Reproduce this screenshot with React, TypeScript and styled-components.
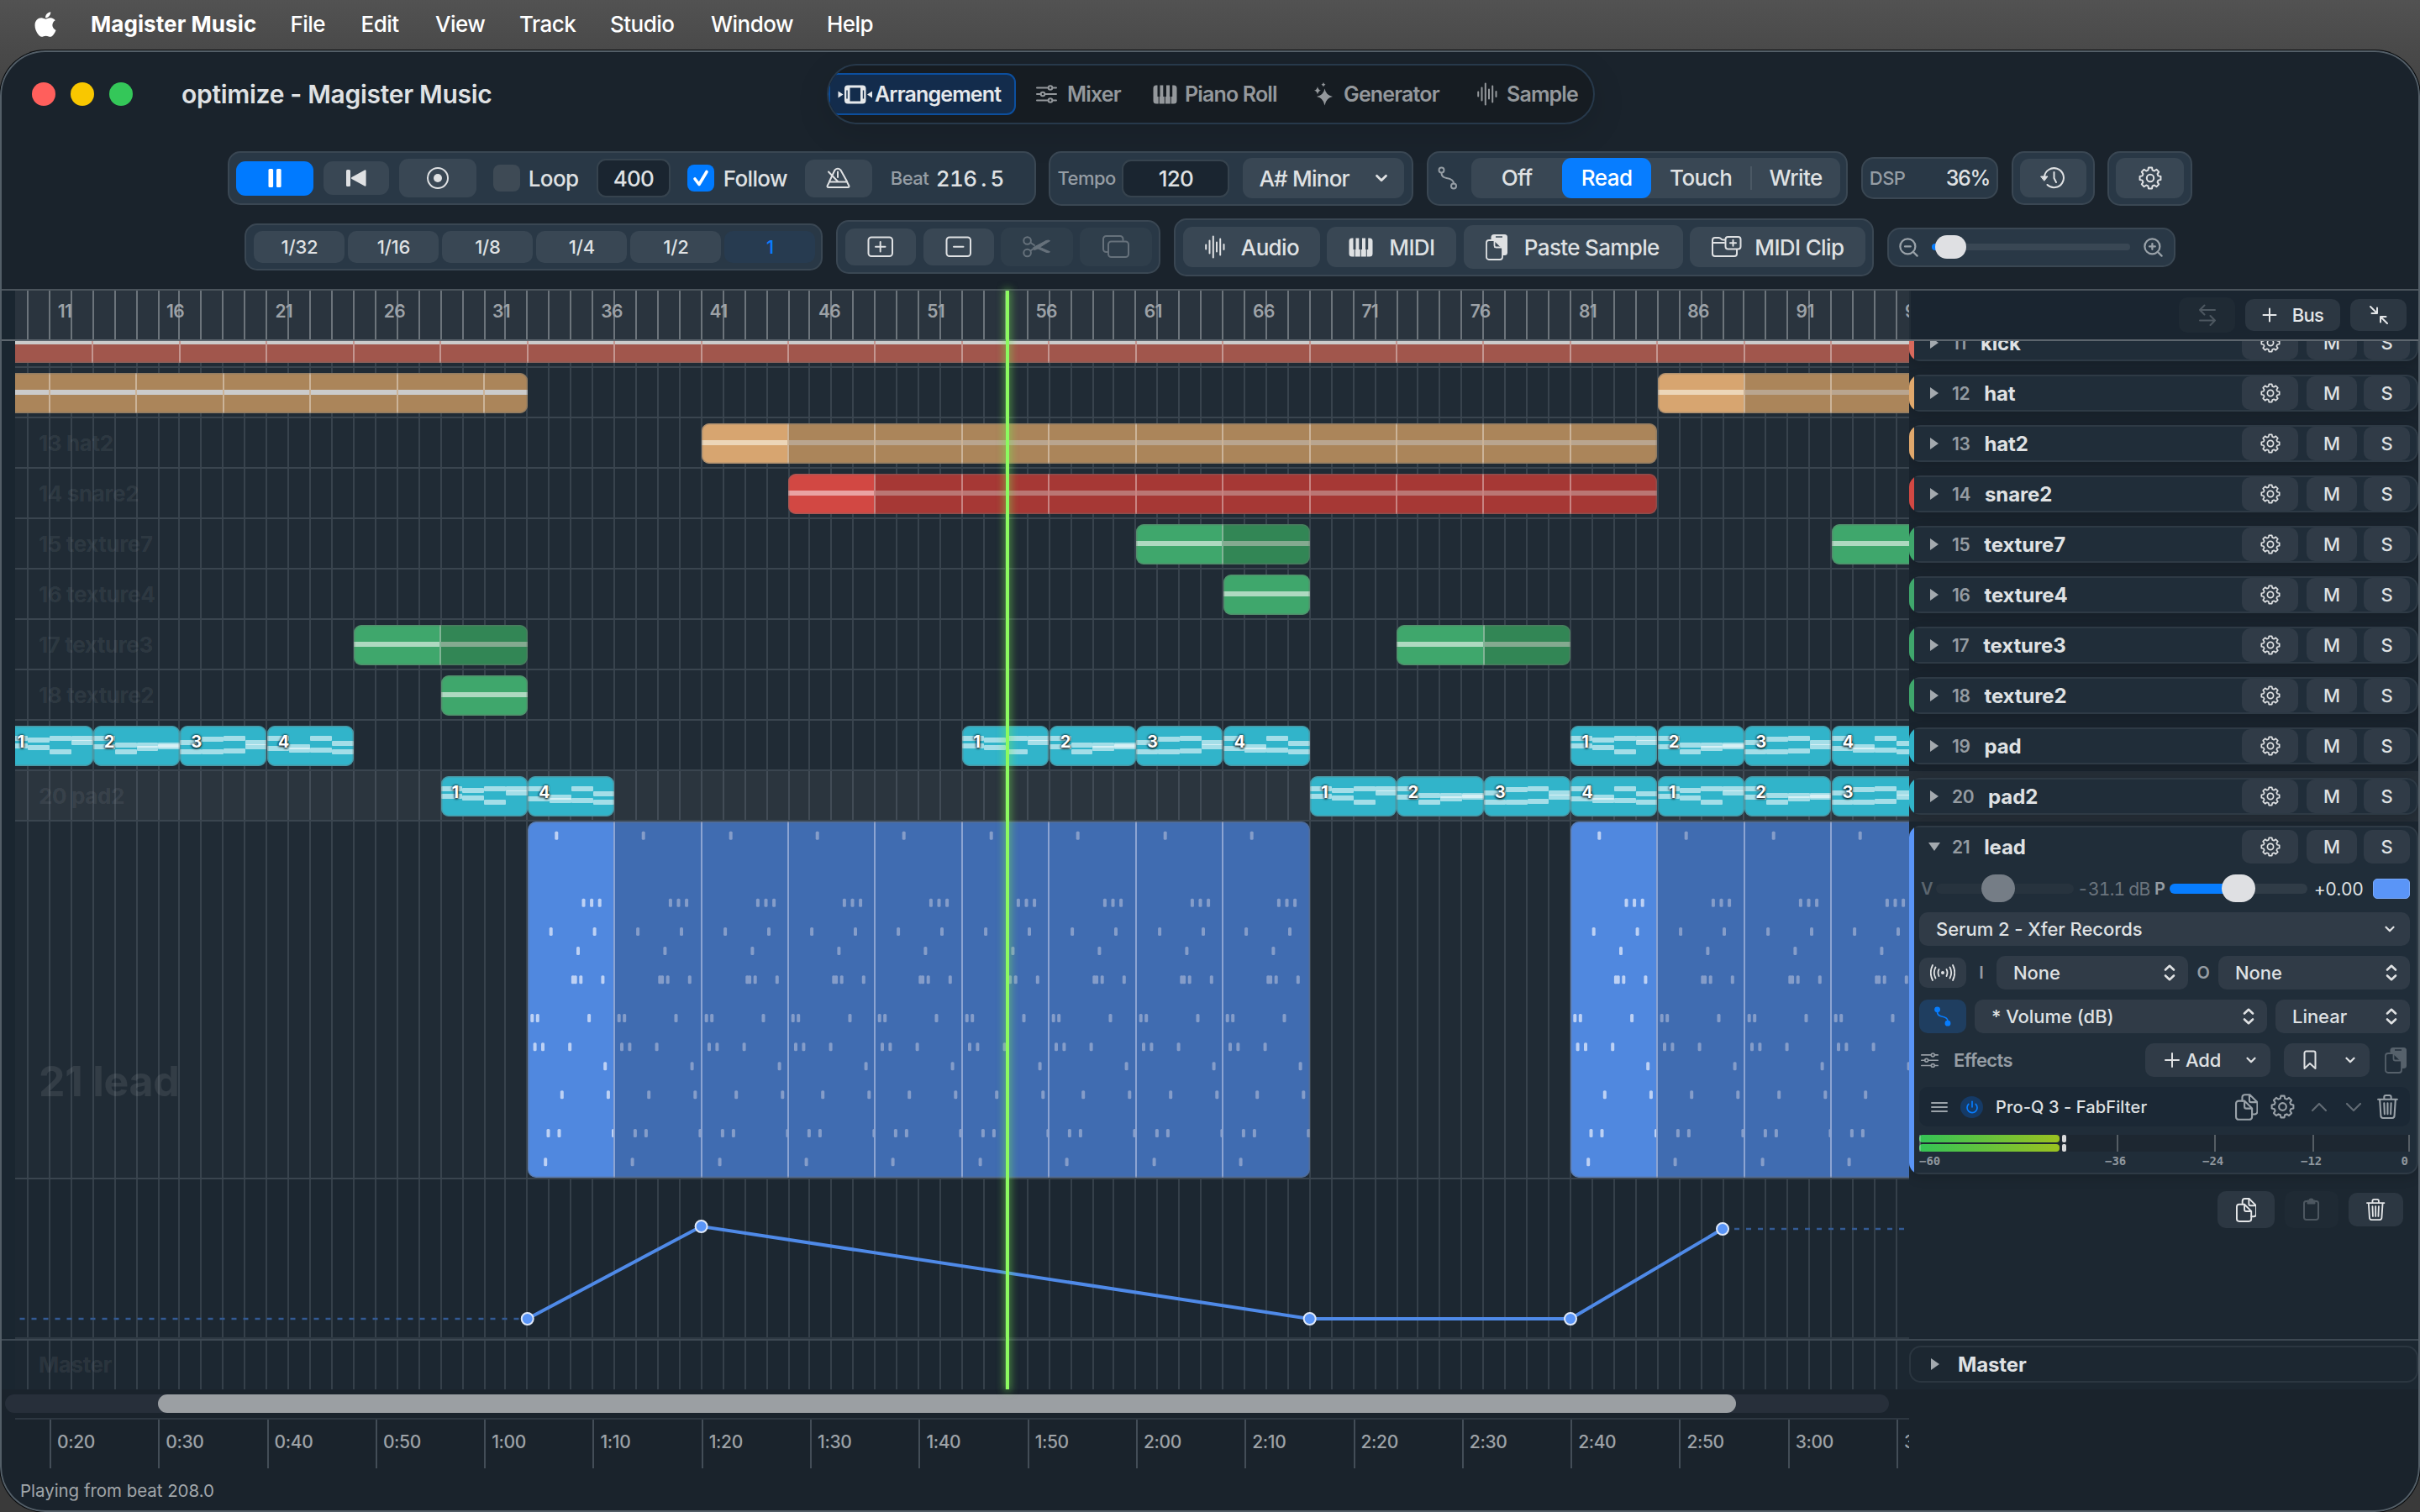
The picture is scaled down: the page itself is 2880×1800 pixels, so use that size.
import styled, { createGlobalStyle } from "styled-components"
import { FaApple } from "react-icons/fa"
import { ChevronDown, ChevronUp, ZoomIn, ZoomOut, Power } from "lucide-react"

const BAR = 25.86
const LANES_LEFT = 18
const barX = (bar: number) => 58.8 + (bar - 11) * BAR - LANES_LEFT
const snap = (x: number) => Math.floor((x + LANES_LEFT) / 2) * 2 - LANES_LEFT

type typeClip = { from: number, to: number, firstDim?: boolean, name?: string }
type typeTrack = {
  id: number
  name: string
  color: string
  bright: string
  dim: string
  line: string
  lineDim: string
  clips: typeClip[]
  midi?: boolean
  selected?: boolean
  hideName?: boolean
}

const green = { color: "#3fa76c", bright: "#3fa76c", dim: "#328655", line: "#aed9c0", lineDim: "#84aa90" }
const orange = { color: "#e0a86c", bright: "#d7a570", dim: "#ab855a", line: "#ecd6b9", lineDim: "#b9a58f" }
const cyan = { color: "#31b4ca", bright: "#31b4ca", dim: "#31b4ca", line: "", lineDim: "" }

const tracks: typeTrack[] = [
  { id: 11, name: "kick", color: "#d8695c", bright: "#a1564c", dim: "#a1564c", line: "#d5d4d4", lineDim: "#d0cfcf", hideName: true,
    clips: [{ from: 5, to: 97, firstDim: true }] },
  { id: 12, name: "hat", ...orange, hideName: true,
    clips: [{ from: 7, to: 33, firstDim: true }, { from: 85, to: 101 }] },
  { id: 13, name: "hat2", ...orange, clips: [{ from: 41, to: 85 }] },
  { id: 14, name: "snare2", color: "#d24843", bright: "#d24843", dim: "#a63835", line: "#e9a3a3", lineDim: "#ba7674",
    clips: [{ from: 45, to: 85 }] },
  { id: 15, name: "texture7", ...green, clips: [{ from: 61, to: 69 }, { from: 93, to: 101 }] },
  { id: 16, name: "texture4", ...green, clips: [{ from: 65, to: 69 }] },
  { id: 17, name: "texture3", ...green, clips: [{ from: 25, to: 33 }, { from: 73, to: 81 }] },
  { id: 18, name: "texture2", ...green, clips: [{ from: 29, to: 33 }] },
  { id: 19, name: "pad", ...cyan, midi: true, hideName: true,
    clips: [[9, "1"], [13, "2"], [17, "3"], [21, "4"], [53, "1"], [57, "2"], [61, "3"], [65, "4"], [81, "1"], [85, "2"], [89, "3"], [93, "4"]]
      .map(([from, name]) => ({ from: Number(from), to: Number(from) + 4, name: String(name) })) },
  { id: 20, name: "pad2", ...cyan, midi: true, selected: true,
    clips: [[29, "1"], [33, "4"], [69, "1"], [73, "2"], [77, "3"], [81, "4"], [85, "1"], [89, "2"], [93, "3"]]
      .map(([from, name]) => ({ from: Number(from), to: Number(from) + 4, name: String(name) })) },
]

// chords of every pad pattern, one pair of offsets for each bar
const padNotes: Record<string, number[][]> = {
  "1": [[15, 24], [17, 26], [15, 31], [15, 20]],
  "2": [[15, 25], [23, 31], [23, 27], [23, 25]],
  "3": [[20, 31], [16, 31], [15, 30], [20, 25]],
  "4": [[15, 27], [25, 29], [15, 29], [21, 31]],
}

const leadNotes: [number, number[]][] = [
  [16.7, [33.9]],
  [96.7, [66.1, 75.7, 85.3]],
  [131, [27.3, 79.2]],
  [154, [59.6]],
  [188.3, [53.5, 56.3, 62.9, 89]],
  [234, [4.9, 11.4, 72.7]],
  [268.3, [8.2, 17.6, 49.8]],
  [291.3, [91.8]],
  [325.3, [40.4, 95.5]],
  [371, [24.1, 37.1, 101.6]],
  [405.3, [20.8]],
]

const points = [[33, 166], [41, 56], [69, 166], [81, 166], [88, 59]]

function App(){
  return(
    <>
      <GlobalStyle />
      <Desktop>
        <MenuBar />
        <Window>
          <TitleBar />
          <TransportBar />
          <EditBar />
          <Workspace>
            <HeaderRow>
              <Gutter />
              <Ruler />
              <PanelHeader />
            </HeaderRow>
            <TracksRow>
              <Gutter />
              <Lanes />
              <TrackPanel />
            </TracksRow>
            <MasterRow>
              <Gutter />
              <MasterLane>
                <GridLines height={58} />
                <Watermark $top={13}>Master</Watermark>
              </MasterLane>
              <Panel>
                <MasterCard>
                  <Triangle />
                  <TrackName>Master</TrackName>
                </MasterCard>
              </Panel>
            </MasterRow>
            <Playhead />
          </Workspace>
          <ScrollTrack><ScrollThumb /></ScrollTrack>
          <Timeline />
          <Status>Playing from beat 208.0</Status>
        </Window>
      </Desktop>
    </>
  )
}

function MenuBar(){
  const items: [string, number][] = [["File", 84], ["Edit", 88.5], ["View", 100], ["Track", 108], ["Studio", 120], ["Window", 138], ["Help", 80]]
  return(
    <Menu>
      <AppleSlot><FaApple size={34} /></AppleSlot>
      <MenuItem $w={237.5} $bold>Magister Music</MenuItem>
      {items.map(([label, w]) => <MenuItem key={label} $w={w}>{label}</MenuItem>)}
    </Menu>
  )
}

function TitleBar(){
  return(
    <TitleRow>
      <Lights>
        <Light $color="#ff5f5c" />
        <Light $color="#f9c700" />
        <Light $color="#34c759" />
      </Lights>
      <Title>optimize - Magister Music</Title>
      <Tabs>
        <Tab $w={223} $active $gap={2}><ArrangeIcon />Arrangement</Tab>
        <Tab $w={139} $gap={12}><SlidersIcon />Mixer</Tab>
        <Tab $w={192} $gap={9}><PianoIcon />Piano Roll</Tab>
        <Tab $w={194} $gap={12}><SparkIcon />Generator</Tab>
        <Tab $w={160} $gap={11}><WaveIcon />Sample</Tab>
      </Tabs>
    </TitleRow>
  )
}

function TransportBar(){
  return(
    <Bar $h={66}>
      <Group $w={962} $h={64}>
        <Btn $w={92} $h={41} $blue>
          <svg width="18" height="22" fill="#fff"><rect x="1.5" y="0" width="5.6" height="22" rx="1.5" /><rect x="11" y="0" width="5.6" height="22" rx="1.5" /></svg>
        </Btn>
        <Btn $w={78} $h={40}>
          <svg width="26" height="22" fill="#dfe1e3"><rect x="1" y="1" width="5" height="20" rx="1.5" /><path d="M23 1.5a1 1 0 0 1 1.6.8v17.4a1 1 0 0 1-1.6.8L7.5 12a1.2 1.2 0 0 1 0-2z" /></svg>
        </Btn>
        <Btn $w={92} $h={46}>
          <Icon width="28" height="28"><circle cx="14" cy="14" r="12" /><circle cx="14" cy="14" r="5" fill="currentColor" stroke="none" /></Icon>
        </Btn>
        <Check $ml={8} />
        <Text $w={69} $ml={-2}>Loop</Text>
        <Field $w={88} $h={46}>400</Field>
        <Check $ml={8} $on>
          <Icon width="20" height="22" style={{ color: "#fff" }}><path strokeWidth="3.6" d="M3 12l5 6.5L17 3.5" /></Icon>
        </Check>
        <Text $w={85} $ml={-1}>Follow</Text>
        <Btn $w={80} $h={45}><MetronomeIcon /></Btn>
        <Text $w={42} $ml={10} $small>Beat</Text>
        <Counter>216<i>.</i>5</Counter>
      </Group>
      <Group $w={434} $h={65}>
        <Text $w={65} $small>Tempo</Text>
        <Field $w={128} $h={45}>120</Field>
        <KeySelect>A# Minor<ChevronDown size={22} strokeWidth={3} /></KeySelect>
      </Group>
      <Group $w={501} $h={65}>
        <CurveSlot><CurveIcon /></CurveSlot>
        <Segmented>
          <Segment $w={108}>Off</Segment>
          <Segment $w={106} $on>Read</Segment>
          <Segment $w={118}>Touch</Segment>
          <Divider />
          <Segment $w={104}>Write</Segment>
        </Segmented>
      </Group>
      <Group $w={163} $h={50} $between><Text $small>DSP</Text><Percent>36%</Percent></Group>
      <Group $w={99} $h={64}><Btn $w={79} $h={46}><HistoryIcon /></Btn></Group>
      <Group $w={101} $h={65}><Btn $w={81} $h={48}><GearIcon size={28} /></Btn></Group>
    </Bar>
  )
}

function EditBar(){
  return(
    <Bar $h={70}>
      <Group $w={688} $h={56} $gap={4} $pad={9}>
        {["1/32", "1/16", "1/8", "1/4", "1/2", "1"].map((step) => {
          return <Step key={step} $on={step === "1"}>{step}</Step>
        })}
      </Group>
      <Group $w={386} $h={64} $gap={8.4} $pad={9}>
        <Btn $w={84} $h={44}>
          <Icon width="32" height="26"><rect x="1.5" y="1.5" width="28.5" height="22.5" rx="3.5" /><path d="M10 12.8h11.5M15.7 7v11.5" /></Icon>
        </Btn>
        <Btn $w={84} $h={44}>
          <Icon width="32" height="26"><rect x="1.5" y="1.5" width="28.5" height="22.5" rx="3.5" /><path d="M10 12.8h11.5" /></Icon>
        </Btn>
        <Btn $w={86} $h={46} $off>
          <Icon width="33" height="26">
            <circle cx="5.6" cy="5.5" r="4.3" /><circle cx="5.6" cy="20" r="4.3" />
            <path d="M9.5 8l4.5 3M9.5 17.5l4-3" />
            <path fill="currentColor" strokeWidth="1" d="M13 13.5L28 5.5q3-1 4.5.2L17 15.5l-3 1zM17.5 12l15 6.8q-1.5 1.5-4.5.5L16 14z" />
          </Icon>
        </Btn>
        <Btn $w={86} $h={46} $off>
          <Icon width="32" height="28"><path d="M6.5 20H4.5a3.5 3.5 0 0 1-3.5-3.5v-12A3.5 3.5 0 0 1 4.5 1h16.5a3.5 3.5 0 0 1 3.5 3.5v1.5" /><rect x="7" y="7.5" width="24" height="18.5" rx="3.5" /></Icon>
        </Btn>
      </Group>
      <Group $w={833} $h={69} $gap={8.5} $pad={9}>
        <Action $w={163}><WaveIcon />Audio</Action>
        <Action $w={154}><PianoIcon />MIDI</Action>
        <Action $w={261} $tall><PasteIcon bg="#394754" />Paste Sample</Action>
        <Action $w={209} $gap={15}>
          <Icon width="36" height="26">
            <path d="M15 8H6.5M30 16.5v4.5a3 3 0 0 1-3 3H4a3 3 0 0 1-3-3V5a3 3 0 0 1 3-3h4.5q1.5 0 2.5 1.2t2.5 1.2h2M1 8h14" />
            <rect x="16.5" y="1" width="18" height="14.5" rx="3" /><path d="M22 8.2h7M25.5 4.7v7" />
          </Icon>
          MIDI Clip
        </Action>
      </Group>
      <Group $w={343} $h={47} $gap={14} $pad={10}>
        <ZoomOut size={27} strokeWidth={2} color="#9aa2a9" />
        <ZoomTrack><ZoomKnob /></ZoomTrack>
        <ZoomIn size={27} strokeWidth={2} color="#9aa2a9" />
      </Group>
    </Bar>
  )
}

function GridLines(props: {height: number, bright?: boolean}){
  const bars = Array.from({ length: 87 }, (_, i) => 10 + i)
  return(
    <GridSvg width="2254" height={props.height} fill={props.bright ? "#6c747b" : "#35404a"}>
      {bars.map((bar) => <rect key={bar} x={snap(barX(bar))} y="0" width="2" height={props.height} />)}
    </GridSvg>
  )
}

function Ruler(){
  const labels = Array.from({ length: 18 }, (_, i) => 11 + i * 5)
  return(
    <RulerBox>
      <GridLines height={58} bright />
      {labels.map((bar) => <RulerLabel key={bar} style={{ left: barX(bar) + 10 }}>{bar}</RulerLabel>)}
    </RulerBox>
  )
}

function PanelHeader(){
  return(
    <PanelTop>
      <PanelBtn $w={67} $h={42} $off>
        <Icon width="22" height="26"><path d="M20 7H2M7.5 1.5L2 7l5.5 5.5M2 19.5h18M14.5 14l5.5 5.5-5.5 5.5" /></Icon>
      </PanelBtn>
      <PanelBtn $w={113} $h={38}>
        <Icon width="18" height="18"><path d="M9 1.5v15M1.5 9h15" /></Icon>
        Bus
      </PanelBtn>
      <PanelBtn $w={67} $h={38}>
        <Icon width="24" height="24"><path d="M2 2l8 8M10 3.5V10H3.5M22 22l-8-8M14 20.5V14h6.5" /></Icon>
      </PanelBtn>
    </PanelTop>
  )
}

function Lanes(){
  return(
    <LanesBox>
      <GridLines height={1188} />
      <LaneStack>
        {tracks.map((track) => {
          return(
            <Lane key={track.id} $h={60} $selected={track.selected}>
              {!track.hideName && <Watermark $top={14}>{track.id} {track.name}</Watermark>}
              {track.clips.map((clip) => <Clip key={clip.from} clip={clip} track={track} />)}
            </Lane>
          )
        })}
        <Lane $h={426}>
          <Watermark $top={279} $big>21 lead</Watermark>
          <LeadClip from={33} to={69} />
          <LeadClip from={81} to={101} />
        </Lane>
        <AutomationLane>
          <Automation />
        </AutomationLane>
      </LaneStack>
    </LanesBox>
  )
}

function Clip(props: {clip: typeClip, track: typeTrack}){
  const { clip, track } = props
  const count = Math.ceil((clip.to - clip.from) / 4)
  const left = barX(clip.from) + 0.3
  const width = (clip.to - clip.from) * BAR - 0.3

  if(track.midi){
    return(
      <ClipBox $bg={track.bright} style={{ left, width }}>
        {padNotes[clip.name ?? "1"].map((chord, bar) => chord.map((y, i) => {
          return <PadNote key={`${bar}-${i}`} style={{ left: bar * BAR, top: y - 3 }} />
        }))}
        <ClipName>{clip.name}</ClipName>
      </ClipBox>
    )
  }

  return(
    <ClipBox style={{ left, width }}>
      {Array.from({ length: count }, (_, i) => {
        const bright = i === 0 && !clip.firstDim
        return(
          <Piece key={i} $bg={bright ? track.bright : track.dim} $first={i === 0}>
            <Stripe $bg={clip.firstDim ? "#cbcbcb" : bright ? track.line : track.lineDim} />
          </Piece>
        )
      })}
    </ClipBox>
  )
}

function LeadClip(props: {from: number, to: number}){
  const count = (props.to - props.from) / 4
  return(
    <ClipBox $tall style={{ left: barX(props.from) + 0.3, width: (props.to - props.from) * BAR - 0.3 }}>
      {Array.from({ length: count }, (_, i) => {
        return(
          <Piece key={i} $bg={i === 0 ? "#5088df" : "#406cb1"} $first={i === 0} $blue>
            <svg width="104" height="424" fill={i === 0 ? "#bdd1f4" : "#859dc9"}>
              {leadNotes.map(([y, xs]) => xs.map((x) => {
                return <rect key={`${x}-${y}`} x={x - (i === 0 ? 1.6 : 2.2)} y={y - 5} width="4" height="10" rx="1.5" />
              }))}
            </svg>
          </Piece>
        )
      })}
    </ClipBox>
  )
}

function Automation(){
  const xy = points.map(([bar, y]) => [barX(bar), y])
  const last = xy[xy.length - 1]
  return(
    <svg width="2254" height="188" fill="none">
      <path d={`M5.5 166H${xy[0][0] - 10}`} stroke="#335a94" strokeWidth="2.5" strokeDasharray="6 8" />
      <path d={`M${last[0] + 14} ${last[1]}H2250`} stroke="#335a94" strokeWidth="2.5" strokeDasharray="6 8" />
      <polyline points={xy.map((p) => p.join(",")).join(" ")} stroke="#4f8ae8" strokeWidth="4" />
      {xy.map(([x, y]) => <circle key={x} cx={x} cy={y} r="7" fill="#5a95f7" stroke="#dfe8f8" strokeWidth="2" />)}
    </svg>
  )
}

function CardHead(props: {id: number, name: string, open?: boolean}){
  return(
    <HeadRow>
      <TriangleSlot><Triangle $open={props.open} /></TriangleSlot>
      <TrackNumber>{props.id}</TrackNumber>
      <TrackName>{props.name}</TrackName>
      <HeadBtn $w={67}><GearIcon size={24} /></HeadBtn>
      <HeadBtn $w={60}>M</HeadBtn>
      <HeadBtn $w={55}>S</HeadBtn>
    </HeadRow>
  )
}

function TrackPanel(){
  return(
    <Panel>
      <CardStack>
        {tracks.map((track) => {
          return(
            <Slot key={track.id} $selected={track.selected}>
              <Card $color={track.color} $h={44}><CardHead id={track.id} name={track.name} /></Card>
            </Slot>
          )
        })}
        <LeadCard />
        <PanelFooter>
          <PanelBtn $w={68} $h={44}><DocsIcon size={29} /></PanelBtn>
          <PanelBtn $w={64} $h={44} $off>
            <Icon width="20" height="28"><path d="M6 4H3.5A2.5 2.5 0 0 0 1 6.5v17A2.5 2.5 0 0 0 3.5 26h12a2.5 2.5 0 0 0 2.5-2.5v-17A2.5 2.5 0 0 0 15.5 4H13" /><path fill="currentColor" d="M5.5 3.5h2a2 2 0 0 1 4 0h2v3h-8z" /></Icon>
          </PanelBtn>
          <PanelBtn $w={65} $h={40}><TrashIcon size={26} /></PanelBtn>
        </PanelFooter>
      </CardStack>
    </Panel>
  )
}

function LeadCard(){
  return(
    <Slot $lead>
      <Card $color="#5a95f7" $h={415}>
        <CardHead id={21} name="lead" open />
        <CardBody>
          <MixRow>
            <MixLabel $w={20} $faded>V</MixLabel>
            <MixSlider $faded><MixKnob $x={54} $faded /></MixSlider>
            <MixValue $w={92} $faded>-31.1 dB</MixValue>
            <MixLabel $w={22}>P</MixLabel>
            <MixSlider><MixFill /><MixKnob $x={62} /></MixSlider>
            <MixValue $w={78}>+0.00</MixValue>
            <Swatch />
          </MixRow>
          <Select $w={584}>Serum 2 - Xfer Records<ChevronDown size={18} strokeWidth={3} /></Select>
          <Row>
            <IconBtn>
              <Icon width="30" height="20" style={{ strokeWidth: 1.8 }}>
                <circle cx="15" cy="10" r="2" fill="currentColor" stroke="none" />
                <path d="M10.5 6q-2 4 0 8M6.5 3.5q-3.5 6.5 0 13M3 1q-4.5 9 0 18M19.5 6q2 4 0 8M23.5 3.5q3.5 6.5 0 13M27 1q4.5 9 0 18" />
              </Icon>
            </IconBtn>
            <RowLabel $w={36}>I</RowLabel>
            <Select $w={228}>None<UpDown /></Select>
            <RowLabel $w={36}>O</RowLabel>
            <Select $w={228}>None<UpDown /></Select>
          </Row>
          <Row $gap={10}>
            <IconBtn $on><CurveIcon solid /></IconBtn>
            <Select $w={348}>* Volume (dB)<UpDown /></Select>
            <Select $w={160}>Linear<UpDown /></Select>
          </Row>
          <Row>
            <EffectsTitle><SlidersIcon size={21} />Effects</EffectsTitle>
            <AddBtn $w={149}>
              <Icon width="18" height="18"><path d="M9 1v16M1 9h16" /></Icon>
              <span>Add</span>
              <ChevronDown size={18} strokeWidth={3} />
            </AddBtn>
            <AddBtn $w={102} $ml={16}>
              <Icon width="16" height="24"><path d="M1.5 22V3.5a2 2 0 0 1 2-2h9a2 2 0 0 1 2 2V22L8 16z" /></Icon>
              <span />
              <ChevronDown size={18} strokeWidth={3} />
            </AddBtn>
            <PasteSlot><PasteIcon bg="#202d39" /></PasteSlot>
          </Row>
          <Effect>
            <Icon width="20" height="14"><path d="M1 2h18M1 7h18M1 12h18" /></Icon>
            <PowerDot><Power size={16} strokeWidth={2.5} /></PowerDot>
            <EffectName>Pro-Q 3 - FabFilter</EffectName>
            <DocsIcon size={32} />
            <GearIcon size={29} />
            <Arrows>
              <ChevronUp size={32} strokeWidth={1.6} />
              <ChevronDown size={32} strokeWidth={1.6} />
            </Arrows>
            <TrashIcon size={29} />
          </Effect>
          <Meter>
            <MeterLine><MeterFill /><Peak /></MeterLine>
            <MeterLine><MeterFill /><Peak /></MeterLine>
            {[0, 235, 351, 468, 582].map((x) => <MeterTick key={x} style={{ left: x }} />)}
          </Meter>
          <MeterLabels><span>−60</span><span>−36</span><span>−24</span><span>−12</span><span>0</span></MeterLabels>
        </CardBody>
      </Card>
    </Slot>
  )
}

function Timeline(){
  const marks = ["0:20", "0:30", "0:40", "0:50", "1:00", "1:10", "1:20", "1:30", "1:40", "1:50", "2:00", "2:10", "2:20", "2:30", "2:40", "2:50", "3:00", "3:10"]
  return(
    <TimelineBox>
      {marks.map((mark) => <TimeMark key={mark}>{mark}</TimeMark>)}
    </TimelineBox>
  )
}

function ArrangeIcon(){
  return(
    <svg width="42" height="23" fill="currentColor">
      <path d="M0.5 7.5L6.5 11.5 0.5 15.5z" />
      <path d="M41 7.5L35 11.5 41 15.5z" />
      <path fillRule="evenodd" d="M12 .5h17.5a4 4 0 0 1 4 4v14a4 4 0 0 1-4 4H12a4 4 0 0 1-4-4v-14a4 4 0 0 1 4-4zM14.5 3.5v16h12.5v-16zM10.3 6.5v10h1.4v-10zM29.8 6.5v10h1.4v-10z" />
    </svg>
  )
}

function SlidersIcon(props: {size?: number}){
  const size = props.size ?? 25
  return(
    <Icon width={size} height={size * 22 / 25} viewBox="0 0 25 22">
      <path d="M1 3.5h13M20 3.5h4M1 11h4M11 11h13M1 18.5h13M20 18.5h4" />
      <circle cx="17" cy="3.5" r="2.3" /><circle cx="8" cy="11" r="2.3" /><circle cx="17" cy="18.5" r="2.3" />
    </Icon>
  )
}

function PianoIcon(){
  return(
    <svg width="29" height="23" fill="currentColor">
      <path d="M4 .5H5.5V14h1.2v8.5H4a3.5 3.5 0 0 1-3.5-3.5V4A3.5 3.5 0 0 1 4 .5z" />
      <path d="M8.5.5h3.8V14h1.5v8.5H7.7V14h.8z" />
      <path d="M16 .5h4V14h.8v8.5h-6V14H16z" />
      <path d="M23.2.5h1.8A3.5 3.5 0 0 1 28.5 4v15a3.5 3.5 0 0 1-3.5 3.5h-3.2V14h1.4z" />
    </svg>
  )
}

function SparkIcon(){
  return(
    <svg width="23" height="28" fill="currentColor">
      <path d="M12.5 7.5q1.5 8 9.5 9.5-8 1.5-9.5 10.5-1.5-9-9.5-10.5 8-1.5 9.5-9.5z" />
      <path d="M4 5q.7 4 4 4.7-3.3.7-4 4.7-.7-4-4-4.7Q3.3 9 4 5z" />
      <path d="M11 0q.4 2.3 2.5 2.8-2.1.5-2.5 2.7-.4-2.2-2.5-2.7Q10.6 2.3 11 0z" />
    </svg>
  )
}

function WaveIcon(){
  return(
    <Icon width="24" height="28">
      <path d="M1.2 11.5v5M5.5 6.5v15M9.8 1.5v25M14 8.5v11M18.2 4.5v19M22.5 11v6" />
    </Icon>
  )
}

function MetronomeIcon(){
  return(
    <Icon width="29" height="26">
      <path d="M4 17L10.5 3.5Q14 0 17.5 3.5L25 17M1.5 22.5q0 1.5 1.5 1.5h23q1.5 0 1.5-1.5L25 17.5H4z" />
      <path d="M3 5.5l11 11.5M14 5.5V12" />
    </Icon>
  )
}

function CurveIcon(props: {solid?: boolean}){
  return(
    <Icon width="24" height="28" viewBox="0 0 24 28">
      <circle cx="4.5" cy="4.5" r="3" fill={props.solid ? "currentColor" : "none"} />
      <circle cx="19" cy="23.5" r="3" fill={props.solid ? "currentColor" : "none"} />
      <path d="M4.5 8q0 5 6 6 8.500 1.500 8.500 6.500" />
    </Icon>
  )
}

function HistoryIcon(){
  return(
    <Icon width="30" height="28">
      <path d="M5 12.5A11.5 11.5 0 1 1 8.5 22" />
      <path fill="currentColor" strokeWidth="1" d="M1 12h8l-4 5z" />
      <path d="M16.5 7v7l2.5 5" />
    </Icon>
  )
}

function GearIcon(props: {size: number}){
  const teeth = 8
  const pts: string[] = []
  for(let i = 0; i < teeth; i++){
    const mid = (i / teeth) * Math.PI * 2 - Math.PI / 2
    const corners: [number, number][] = [[-0.27, 9.8], [-0.16, 12.6], [0.16, 12.6], [0.27, 9.8]]
    corners.forEach(([a, r]) => pts.push(`${(14 + Math.cos(mid + a) * r).toFixed(2)} ${(14 + Math.sin(mid + a) * r).toFixed(2)}`))
  }
  return(
    <Icon width={props.size} height={props.size} viewBox="0 0 28 28">
      <path d={`M${pts.join("L")}Z`} />
      <circle cx="14" cy="14" r="4.2" />
    </Icon>
  )
}

function DocsIcon(props: {size: number}){
  return(
    <Icon width={props.size * 0.86} height={props.size} viewBox="0 0 26 30">
      <path d="M8 8V4a3 3 0 0 1 3-3h5.5L25 9.5V20a3 3 0 0 1-3 3h-3M16 1v6.5a2 2 0 0 0 2 2h7" />
      <path d="M4 8h6.5L19 16.5V26a3 3 0 0 1-3 3H4a3 3 0 0 1-3-3V11a3 3 0 0 1 3-3zM10.5 8v6.5a2 2 0 0 0 2 2H19" />
    </Icon>
  )
}

function PasteIcon(props: {bg: string}){
  return(
    <svg width="27" height="33" fill="none" stroke="currentColor" strokeWidth="1.8">
      <rect x="6.5" y="1" width="19.5" height="25" rx="3.5" fill="currentColor" stroke="none" />
      <path d="M12 4h8" stroke={props.bg} strokeWidth="1.5" />
      <path d="M4 8h6.5L20 17v11a3 3 0 0 1-3 3H4a3 3 0 0 1-3-3V11a3 3 0 0 1 3-3z" fill={props.bg} />
      <path d="M10.5 8v6.5a2 2 0 0 0 2 2H20" />
    </svg>
  )
}

function TrashIcon(props: {size: number}){
  return(
    <Icon width={props.size * 0.86} height={props.size} viewBox="0 0 24 28">
      <path d="M1 5.5h22M8 5V3a2 2 0 0 1 2-2h4a2 2 0 0 1 2 2v2M3 6l1.2 18.5A2.7 2.7 0 0 0 7 27h10a2.7 2.7 0 0 0 2.8-2.5L21 6M8 10l.5 12.5M12 10v12.5M16 10l-.5 12.5" />
    </Icon>
  )
}

function UpDown(){
  return(
    <Icon width="14" height="20" style={{ strokeWidth: 2.6 }}><path d="M2 6.5L7 1.8l5 4.7M2 13.5l5 4.7 5-4.7" /></Icon>
  )
}

const GlobalStyle = createGlobalStyle`
  *{
    box-sizing: border-box;
  }

  body{
    margin: 0;
    background: #3a3a3a;
    font-family: Inter, "Liberation Sans", sans-serif;
    letter-spacing: -0.01em;
    color: #dfe1e3;
  }

  svg{
    display: block;
    flex: none;
  }
`

const Icon = styled.svg`
  fill: none;
  stroke: currentColor;
  stroke-width: 2;
  stroke-linecap: round;
  stroke-linejoin: round;
`

const Desktop = styled.div`
  width: 2880px;
  height: 1800px;
  overflow: hidden;
  display: flex;
  flex-direction: column;
  background: linear-gradient(#525252, #494949 62px, #3a3a3a 200px);
`

const Menu = styled.nav`
  height: 60px;
  flex: none;
  display: flex;
  align-items: center;
  padding-left: 37px;
  padding-bottom: 3px;
  color: #fff;
`

const AppleSlot = styled.div`
  width: 71px;
`

const MenuItem = styled.span<{$w: number, $bold?: boolean}>`
  width: ${(p) => p.$w}px;
  font-size: 26px;
  font-weight: ${(p) => p.$bold ? 700 : 500};
  letter-spacing: ${(p) => p.$bold ? "0.003em" : "-0.02em"};
  white-space: nowrap;
`

const Window = styled.main`
  height: 1740px;
  flex: none;
  position: relative;
  overflow: hidden;
  border-radius: 54px;
  background: #1a232c;
  box-shadow: 0 0 0 1px #0a0c0e;

  &::after{
    content: "";
    position: absolute;
    inset: 0;
    border: 2px solid #535e67;
    border-radius: 54px;
    pointer-events: none;
  }
`

const TitleRow = styled.header`
  height: 104px;
  margin-bottom: 15px;
  display: flex;
  align-items: center;
`

const Lights = styled.div`
  display: flex;
  gap: 18px;
  margin-left: 38px;
  width: 178px;
`

const Light = styled.span<{$color: string}>`
  width: 28px;
  height: 28px;
  border-radius: 50%;
  background: ${(p) => p.$color};
`

const Title = styled.h1`
  margin: 0;
  width: 768px;
  font-size: 30px;
  font-weight: 600;
  letter-spacing: -0.01em;
`

const Tabs = styled.div`
  width: 914px;
  height: 72px;
  display: flex;
  align-items: center;
  border: 2px solid #27394b;
  border-radius: 36px;
  overflow: hidden;
  background: #161c22;
  box-shadow: 0 10px 40px rgba(0, 0, 0, 0.12);
`

const Tab = styled.div<{$w: number, $active?: boolean, $gap: number}>`
  width: ${(p) => p.$w}px;
  height: 50px;
  padding-left: ${(p) => p.$active ? 9 : 22}px;
  flex: none;
  display: flex;
  align-items: center;
  gap: ${(p) => p.$gap}px;
  border: 2px solid ${(p) => p.$active ? "#0c4f9f" : "transparent"};
  border-radius: 11px;
  background: ${(p) => p.$active ? "#132c4c" : "transparent"};
  color: ${(p) => p.$active ? "#e6e9ec" : "#94989c"};
  font-size: 25px;
  font-weight: 600;
  letter-spacing: -0.034em;
  white-space: nowrap;
`

const Bar = styled.div<{$h: number}>`
  height: ${(p) => p.$h}px;
  margin-bottom: ${(p) => p.$h === 66 ? 14 : 15}px;
  display: flex;
  align-items: center;
  justify-content: center;
  gap: 15.7px;
`

const Group = styled.section<{$w: number, $h: number, $gap?: number, $pad?: number, $between?: boolean}>`
  width: ${(p) => p.$w}px;
  height: ${(p) => p.$h}px;
  padding: 0 0 0 ${(p) => p.$pad ?? 8}px;
  padding-right: ${(p) => p.$between ? 8 : 0}px;
  display: flex;
  align-items: center;
  justify-content: ${(p) => p.$between ? "space-between" : "flex-start"};
  gap: ${(p) => p.$gap ?? 12}px;
  border: 2px solid #3a4753;
  border-radius: 15px;
  background: #293846;
`

const Btn = styled.button<{$w: number, $h: number, $blue?: boolean, $off?: boolean}>`
  width: ${(p) => p.$w}px;
  height: ${(p) => p.$h}px;
  padding: 0;
  flex: none;
  display: flex;
  align-items: center;
  justify-content: center;
  border: none;
  border-radius: 11px;
  background: ${(p) => p.$blue ? "#007aff" : p.$off ? "#2f3e4b" : "#394754"};
  color: ${(p) => p.$off ? "#66717b" : "#dfe1e3"};
`

const Check = styled.span<{$on?: boolean, $ml: number}>`
  width: 32px;
  height: 32px;
  margin-left: ${(p) => p.$ml}px;
  flex: none;
  display: flex;
  align-items: center;
  justify-content: center;
  border-radius: 8px;
  background: ${(p) => p.$on ? "#007aff" : "#3e4a55"};
`

const Text = styled.span<{$w?: number, $ml?: number, $small?: boolean}>`
  width: ${(p) => p.$w ? `${p.$w}px` : "auto"};
  margin-left: ${(p) => p.$ml ?? 0}px;
  flex: none;
  font-size: ${(p) => p.$small ? 22 : 26}px;
  font-weight: 500;
  letter-spacing: -0.025em;
  color: ${(p) => p.$small ? "#959da4" : "#dfe1e3"};
  white-space: nowrap;
`

const Percent = styled(Text)`
  font-size: 25px;
  letter-spacing: -0.055em;
`

const Field = styled.div<{$w: number, $h: number}>`
  width: ${(p) => p.$w}px;
  height: ${(p) => p.$h}px;
  flex: none;
  display: flex;
  align-items: center;
  justify-content: center;
  border: 2px solid #36434e;
  border-radius: 11px;
  background: #1a2530;
  font-size: 26px;
  font-weight: 500;
  letter-spacing: -0.03em;
`

const Counter = styled.span`
  font-size: 26px;
  font-weight: 500;
  font-variant-numeric: tabular-nums;
  letter-spacing: -0.025em;

  i{
    display: inline-block;
    width: 16px;
    text-align: center;
    font-style: normal;
  }
`

const KeySelect = styled.div`
  width: 192px;
  height: 48px;
  margin-left: 4px;
  padding: 0 16px 0 19px;
  display: flex;
  align-items: center;
  justify-content: space-between;
  border-radius: 11px;
  background: #394754;
  font-size: 26px;
  font-weight: 500;
  letter-spacing: -0.03em;
`

const CurveSlot = styled.div`
  width: 31px;
  padding-left: 3px;
  color: #959da4;
`

const Segmented = styled.div`
  width: 439px;
  height: 48px;
  display: flex;
  align-items: center;
  border-radius: 11px;
  background: #394754;
`

const Segment = styled.div<{$w: number, $on?: boolean}>`
  width: ${(p) => p.$w}px;
  height: 48px;
  line-height: 48px;
  text-align: center;
  border-radius: 11px;
  background: ${(p) => p.$on ? "#077dff" : "transparent"};
  color: ${(p) => p.$on ? "#fff" : "#dfe1e3"};
  font-size: 26px;
  font-weight: 500;
  letter-spacing: -0.02em;
`

const Divider = styled.span`
  width: 2px;
  height: 28px;
  background: #4b5864;
`

const Step = styled.div<{$on?: boolean}>`
  width: 108px;
  height: 38px;
  line-height: 38px;
  text-align: center;
  border-radius: 10px;
  background: ${(p) => p.$on ? "#273b50" : "#394754"};
  color: ${(p) => p.$on ? "#0a7cff" : "#dfe1e3"};
  font-size: 22px;
  font-weight: 500;
`

const Action = styled.div<{$w: number, $tall?: boolean, $gap?: number}>`
  width: ${(p) => p.$w}px;
  height: ${(p) => p.$tall ? 52 : 48}px;
  padding-left: 26px;
  display: flex;
  align-items: center;
  gap: ${(p) => p.$gap ?? 19}px;
  border-radius: 11px;
  background: #394754;
  font-size: 26px;
  font-weight: 500;
  letter-spacing: -0.025em;
  white-space: nowrap;
`

const ZoomTrack = styled.div`
  width: 236px;
  height: 8px;
  display: flex;
  align-items: center;
  border-radius: 4px;
  background: linear-gradient(90deg, #077dff 20px, #394754 20px);
`

const ZoomKnob = styled.span`
  width: 37px;
  height: 28px;
  margin-left: 4px;
  border-radius: 14px;
  background: #dfe0e3;
`

const Workspace = styled.div`
  position: relative;
  height: 1310px;
  background: #1c2731;
`

const HeaderRow = styled.div`
  height: 62px;
  display: flex;
  border-top: 2px solid #4a535b;
  border-bottom: 2px solid #5d666e;
`

const Gutter = styled.div`
  width: 18px;
  flex: none;
  background: #1a2630;
`

const RulerBox = styled.div`
  position: relative;
  width: 2254px;
  flex: none;
  overflow: hidden;
  background: #2a343e;
`

const RulerLabel = styled.span`
  position: absolute;
  top: 12px;
  font-size: 21px;
  font-weight: 600;
  letter-spacing: -0.03em;
  color: #9da2a7;
`

const GridSvg = styled.svg`
  position: absolute;
  top: 0;
  left: 0;
`

const PanelTop = styled.div`
  flex: 1;
  padding-right: 16px;
  display: flex;
  align-items: center;
  justify-content: flex-end;
  gap: 12px;
  border-left: 2px solid #222d37;
  background: #1a2530;
`

const PanelBtn = styled.button<{$w: number, $h: number, $off?: boolean}>`
  width: ${(p) => p.$w}px;
  height: ${(p) => p.$h}px;
  padding: 0;
  display: flex;
  align-items: center;
  justify-content: center;
  gap: 18px;
  border: none;
  border-radius: 10px;
  background: ${(p) => p.$off ? "#1f2a34" : "#2c3742"};
  color: ${(p) => p.$off ? "#4d5760" : "#e4e6e8"};
  font-family: inherit;
  font-size: 22px;
  font-weight: 500;
  letter-spacing: -0.03em;
`

const TracksRow = styled.div`
  height: 1188px;
  display: flex;
  overflow: hidden;
`

const MasterRow = styled.div`
  height: 60px;
  display: flex;
  border-top: 2px solid #3d4852;
`

const MasterLane = styled.div`
  position: relative;
  width: 2254px;
  flex: none;
`

const LanesBox = styled.div`
  position: relative;
  width: 2254px;
  flex: none;
  overflow: hidden;
`

const LaneStack = styled.div`
  position: relative;
  margin-top: -28px;
`

const Lane = styled.div<{$h: number, $selected?: boolean}>`
  position: relative;
  height: ${(p) => p.$h}px;
  border-bottom: 2px solid #3a454f;
  background: rgba(255, 255, 255, ${(p) => p.$selected ? 0.065 : 0.02});
`

const AutomationLane = styled.div`
  height: 190px;
  border-bottom: 2px solid #2e3943;
`

const Watermark = styled.span<{$top: number, $big?: boolean}>`
  position: absolute;
  left: 28px;
  top: ${(p) => p.$top}px;
  font-size: ${(p) => p.$big ? 50 : 26}px;
  font-weight: 700;
  letter-spacing: ${(p) => p.$big ? "-0.005em" : "-0.015em"};
  color: rgba(255, 255, 255, 0.085);
`

const ClipBox = styled.div<{$bg?: string, $tall?: boolean}>`
  position: absolute;
  top: ${(p) => p.$tall ? 0 : 6}px;
  height: ${(p) => p.$tall ? 424 : 48}px;
  display: flex;
  overflow: hidden;
  border-radius: ${(p) => p.$tall ? 10 : 9}px;
  background: ${(p) => p.$bg ?? "transparent"};

  &::after{
    content: "";
    position: absolute;
    inset: 0;
    border-radius: inherit;
    box-shadow: inset 0 0 0 1.5px rgba(110, 110, 110, 0.4);
  }
`

const Piece = styled.div<{$bg: string, $first: boolean, $blue?: boolean}>`
  width: ${(p) => p.$first ? 102.1 : 103.44}px;
  height: 100%;
  flex: 1 0 auto;
  max-width: ${(p) => p.$first ? 102.1 : 103.44}px;
  padding-top: ${(p) => p.$blue ? 0 : 20}px;
  overflow: hidden;
  border-left: ${(p) => p.$first ? 0 : 2}px solid ${(p) => p.$blue ? "#8ca4d2" : "rgba(255, 255, 255, 0.38)"};
  background: ${(p) => p.$bg};

  &:last-child{
    max-width: none;
  }
`

const Stripe = styled.div<{$bg: string}>`
  height: 6px;
  background: ${(p) => p.$bg};
`

const PadNote = styled.span`
  position: absolute;
  width: 25.86px;
  height: 6px;
  border-radius: 1px;
  background: rgba(255, 255, 255, 0.56);
`

const ClipName = styled.span`
  position: absolute;
  left: 13px;
  top: 7px;
  font-size: 20px;
  font-weight: 700;
  color: #fff;
  text-shadow: 0 0 3px #000, 0 1px 3px #000;
`

const Playhead = styled.div`
  position: absolute;
  left: 1197px;
  top: 2px;
  width: 4px;
  height: 1308px;
  background: #8cfa60;
  box-shadow: 0 0 10px 2px rgba(120, 240, 80, 0.5);
`

const Panel = styled.aside`
  width: 608px;
  flex: none;
  overflow: hidden;
`

const CardStack = styled.div`
  margin-top: -28px;
`

const Slot = styled.div<{$selected?: boolean, $lead?: boolean}>`
  height: ${(p) => p.$lead ? 440 : 60}px;
  padding-top: ${(p) => p.$lead ? 5 : 8}px;
  background: ${(p) => p.$selected ? "#262f38" : p.$lead ? "transparent" : "#1a242e"};
`

const Card = styled.div<{$color: string, $h: number}>`
  position: relative;
  width: 606px;
  height: ${(p) => p.$h}px;
  padding-top: ${(p) => p.$h > 44 ? 5 : 2}px;
  overflow: hidden;
  border-radius: 14px;
  background: linear-gradient(90deg, ${(p) => p.$color} 6px, #202d39 6px);
  box-shadow: 0 4px 14px rgba(0, 0, 0, 0.15);

  &::after{
    content: "";
    position: absolute;
    inset: 0 0 0 6px;
    border: 2px solid #2e3a45;
    border-left: none;
    border-radius: 0 14px 14px 0;
    pointer-events: none;
  }
`

const HeadRow = styled.div`
  height: 40px;
  padding: 0 10px 0 20px;
  display: flex;
  align-items: center;
`

const TriangleSlot = styled.div`
  width: 31px;
  display: flex;
  padding-left: 3px;
`

const Triangle = styled.span<{$open?: boolean}>`
  width: 0;
  height: 0;
  margin-left: ${(p) => p.$open ? 0 : 2}px;
  border-style: solid;
  border-color: transparent;
  border-width: ${(p) => p.$open ? "10px 7px 0" : "7px 0 7px 10px"};
  border-${(p) => p.$open ? "top" : "left"}-color: #a3a9ae;
`

const TrackNumber = styled.span`
  margin-right: 17px;
  font-size: 21px;
  font-weight: 600;
  letter-spacing: -0.02em;
  color: #949ba1;
`

const TrackName = styled.span`
  flex: 1;
  font-size: 24px;
  font-weight: 650;
  letter-spacing: -0.005em;
`

const HeadBtn = styled.button<{$w: number}>`
  width: ${(p) => p.$w}px;
  height: 40px;
  padding: 0;
  margin-left: ${(p) => p.$w === 55 ? 8 : 10}px;
  display: flex;
  align-items: center;
  justify-content: center;
  border: none;
  border-radius: 10px;
  background: #303b47;
  color: #dfe1e3;
  font-family: inherit;
  font-size: 22px;
  font-weight: 500;
`

const CardBody = styled.div`
  padding: 0 10px 0 12px;
`

const MixRow = styled.div`
  height: 34px;
  margin-top: 13px;
  display: flex;
  align-items: center;
`

const MixLabel = styled.span<{$w: number, $faded?: boolean}>`
  width: ${(p) => p.$w}px;
  flex: none;
  padding-left: ${(p) => p.$faded ? 2 : 4}px;
  font-size: 20px;
  font-weight: 600;
  color: ${(p) => p.$faded ? "#5c666f" : "#969da4"};
`

const MixSlider = styled.div<{$faded?: boolean}>`
  position: relative;
  width: 164px;
  height: 12px;
  flex: none;
  border-radius: 6px;
  background: ${(p) => p.$faded ? "#27333e" : "#303c47"};
`

const MixFill = styled.div`
  width: 80px;
  height: 12px;
  border-radius: 6px 0 0 6px;
  background: #077dff;
`

const MixKnob = styled.span<{$x: number, $faded?: boolean}>`
  position: absolute;
  top: -11px;
  left: ${(p) => p.$x}px;
  width: 40px;
  height: 33px;
  border-radius: 17px;
  background: ${(p) => p.$faded ? "#757d86" : "#dfe0e3"};
`

const MixValue = styled.span<{$w: number, $faded?: boolean}>`
  width: ${(p) => p.$w}px;
  flex: none;
  padding-left: ${(p) => p.$faded ? 4 : 8}px;
  font-size: 21px;
  font-weight: 400;
  font-variant-numeric: tabular-nums;
  letter-spacing: ${(p) => p.$faded ? "-0.035em" : "-0.015em"};
  white-space: nowrap;
  color: ${(p) => p.$faded ? "#6b747d" : "#dfe1e3"};
`

const Swatch = styled.span`
  width: 44px;
  height: 24px;
  flex: none;
  border: 1.5px solid #7aa9f8;
  border-radius: 5px;
  background: #5a95f7;
`

const Select = styled.div<{$w: number}>`
  width: ${(p) => p.$w}px;
  height: 40px;
  margin-top: ${(p) => p.$w === 584 ? 11 : 0}px;
  padding: 0 15px 0 20px;
  flex: none;
  display: flex;
  align-items: center;
  justify-content: space-between;
  border-radius: 10px;
  background: #303b47;
  font-size: 22px;
  font-weight: 500;
  letter-spacing: -0.002em;
`

const Row = styled.div<{$gap?: number}>`
  height: 40px;
  margin-top: 12px;
  display: flex;
  align-items: center;
  gap: ${(p) => p.$gap ?? 0}px;
`

const IconBtn = styled.div<{$on?: boolean}>`
  width: 56px;
  height: ${(p) => p.$on ? 40 : 36}px;
  flex: none;
  display: flex;
  align-items: center;
  justify-content: center;
  border-radius: 10px;
  background: ${(p) => p.$on ? "#1f3e60" : "#303b47"};
  color: ${(p) => p.$on ? "#077dff" : "#dfe1e3"};

  svg{
    max-height: 24px;
  }
`

const RowLabel = styled.span<{$w: number}>`
  width: ${(p) => p.$w}px;
  text-align: center;
  font-size: 20px;
  font-weight: 600;
  color: #969da4;
`

const EffectsTitle = styled.div`
  flex: 1;
  padding-left: 2px;
  display: flex;
  align-items: center;
  gap: 18px;
  font-size: 22px;
  font-weight: 600;
  letter-spacing: -0.03em;
  color: #969da4;
`

const AddBtn = styled.div<{$w: number, $ml?: number}>`
  width: ${(p) => p.$w}px;
  height: 40px;
  margin-left: ${(p) => p.$ml ?? 0}px;
  padding: 0 14px 0 23px;
  display: flex;
  align-items: center;
  gap: 7px;
  border-radius: 10px;
  background: #303b47;
  font-size: 22px;
  font-weight: 500;

  span{
    flex: 1;
  }
`

const PasteSlot = styled.div`
  width: 48px;
  padding-left: 18px;
  color: #56616b;
`

const Effect = styled.div`
  height: 47px;
  margin-top: 12px;
  padding: 0 14px 0 14px;
  display: flex;
  align-items: center;
  gap: 15px;
  border-radius: 10px;
  background: #1b2835;
  color: #9aa2a9;
`

const Arrows = styled.div`
  display: flex;
  gap: 9px;
  margin: 0 -3px 0 -2px;
  color: #626b74;
`

const PowerDot = styled.span`
  width: 27px;
  height: 26px;
  display: flex;
  align-items: center;
  justify-content: center;
  border-radius: 50%;
  background: #153a66;
  color: #077dff;
`

const EffectName = styled.span`
  flex: 1;
  font-size: 20px;
  font-weight: 500;
  letter-spacing: 0.006em;
  white-space: nowrap;
  color: #dfe1e3;
`

const Meter = styled.div`
  position: relative;
  height: 20px;
  margin-top: 10px;
  display: flex;
  flex-direction: column;
  justify-content: space-between;
  background: #1d2731;
`

const MeterLine = styled.div`
  height: 9px;
  display: flex;
  gap: 3px;
`

const MeterFill = styled.div`
  width: 167px;
  border-radius: 4px;
  background: linear-gradient(90deg, #34c456, #9bc120);
`

const Peak = styled.div`
  width: 5px;
  border-radius: 2px;
  background: #d9dadb;
`

const MeterTick = styled.span`
  position: absolute;
  top: 0;
  width: 2px;
  height: 20px;
  background: rgba(255, 255, 255, 0.25);
`

const MeterLabels = styled.div`
  display: grid;
  grid-template-columns: 221px 116px 117px 90px 38px;
  margin-top: 3px;
  font-family: "DejaVu Sans Mono", monospace;
  font-size: 14px;
  font-weight: 700;
  letter-spacing: 0;
  color: #8f979e;

  span:last-child{
    text-align: right;
  }
`

const PanelFooter = styled.div`
  padding-right: 20px;
  display: flex;
  align-items: center;
  justify-content: flex-end;
  gap: 12px;
`

const MasterCard = styled.div`
  width: 606px;
  height: 44px;
  margin-top: 6px;
  padding-left: 22px;
  display: flex;
  align-items: center;
  gap: 22px;
  border: 2px solid #2b3640;
  border-radius: 14px;
`

const ScrollTrack = styled.div`
  width: 2242px;
  height: 22px;
  margin: 6px 0 6px 6px;
  padding-left: 182px;
  border-radius: 11px;
  background: #272f3a;
`

const ScrollThumb = styled.div`
  width: 1878px;
  height: 22px;
  border-radius: 11px;
  background: #9b9fa3;
`

const TimelineBox = styled.div`
  width: 2254px;
  height: 60px;
  margin-left: 18px;
  padding-left: 41px;
  display: flex;
  overflow: hidden;
  border-top: 2px solid #2d3741;
`

const TimeMark = styled.div`
  width: 129.3px;
  flex: none;
  padding: 14px 0 0 7px;
  border-left: 2px solid #434d57;
  font-size: 21px;
  font-weight: 500;
  letter-spacing: -0.018em;
  color: #9da2a7;
`

const Status = styled.footer`
  margin: 14px 0 0 24px;
  font-size: 20.5px;
  font-weight: 400;
  letter-spacing: -0.002em;
  color: #a1a6aa;
`

export default App
